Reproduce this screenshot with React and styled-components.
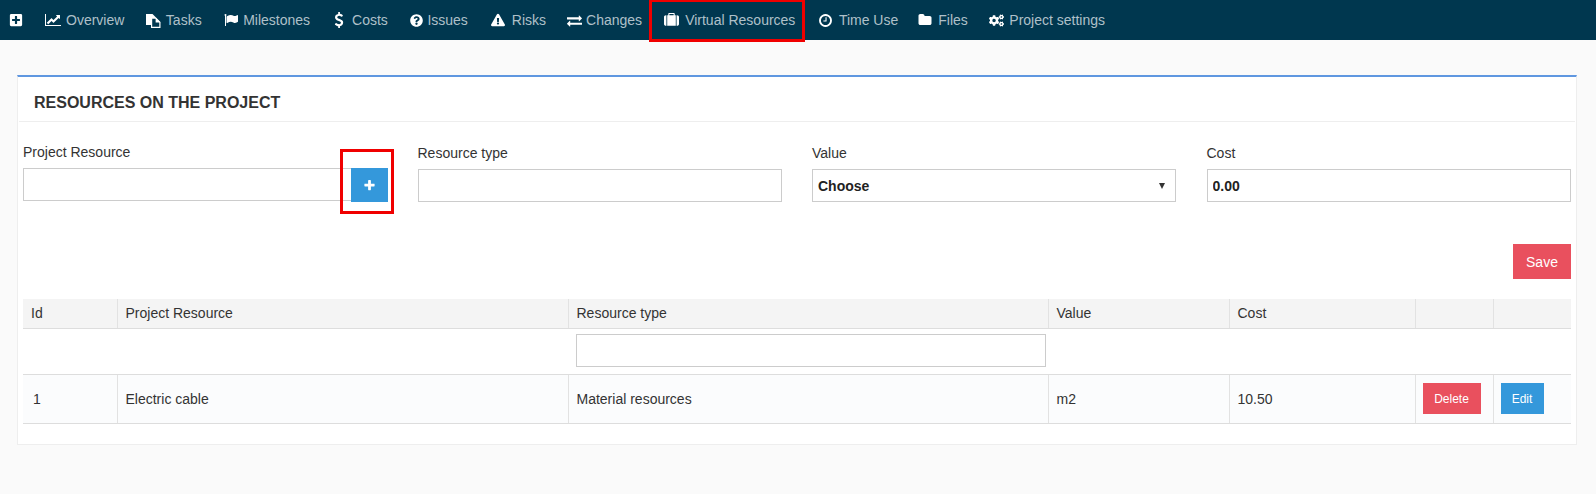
import React from 'react';
import styled, { createGlobalStyle } from 'styled-components';
import {
  FaPlusSquare,
  FaQuestionCircle,
  FaExclamationTriangle,
  FaCogs,
} from 'react-icons/fa';

const GlobalStyle = createGlobalStyle`
  * { box-sizing: border-box; }
  html, body { margin: 0; padding: 0; }
  body {
    background: #fafafa;
    color: #333;
    font-family: "Liberation Sans", Arial, sans-serif;
    font-size: 14px;
  }
`;

const Page = styled.div`
  width: 1596px;
  height: 494px;
  overflow: hidden;
`;

const TopNav = styled.nav`
  height: 40px;
  background: #00374f;
  display: flex;
  align-items: center;
  padding-left: 9px;
`;

const NavItem = styled.a`
  position: relative;
  display: flex;
  align-items: center;
  gap: ${p => p.$gap}px;
  margin-left: ${p => p.$left}px;
  color: #afc0c9;
  font-size: 14px;
  line-height: 40px;
  white-space: nowrap;

  svg {
    color: #fff;
    flex: none;
  }
`;

const RedMark = styled.span`
  position: absolute;
  left: -15px;
  right: -10px;
  top: 0;
  height: 42px;
  border: 3px solid #f00000;
  border-top-width: 2px;
`;

const Panel = styled.section`
  margin: 35px 19px 0 17px;
  height: 370px;
  background: #fff;
  border: 1px solid #eeeeee;
  border-top: 2px solid #5f97e0;
`;

const PanelHeader = styled.header`
  height: 45px;
  margin: 0 1px;
  padding: 8px 0 0 15px;
  display: flex;
  align-items: center;
  border-bottom: 1px solid #eeeeee;
`;

const PanelTitle = styled.h3`
  margin: 0;
  font-size: 16px;
  font-weight: 700;
  color: #333;
  text-transform: uppercase;
`;

const PanelBody = styled.div`
  padding: 0 5px;
`;

const FormGrid = styled.div`
  display: grid;
  grid-template-columns: repeat(4, 364px);
  column-gap: 30.5px;
  padding-top: 23px;
`;

const Field = styled.div`
  margin-top: ${p => (p.$raised ? -1 : 0)}px;
`;

const Label = styled.label`
  display: block;
  height: 24px;
  line-height: 16px;
  font-size: 14px;
  color: #333;
`;

const InputRow = styled.div`
  position: relative;
  display: flex;
`;

const TextInput = styled.input`
  flex: none;
  width: ${p => p.$width || '100%'};
  height: 33px;
  padding: 0 5px;
  background: #fff;
  border: 1px solid #cccccc;
  border-radius: 0;
  font-family: inherit;
  font-size: 14px;
  font-weight: 700;
  color: #222;
  outline: none;
`;

const AddButton = styled.button`
  position: relative;
  flex: none;
  width: 37px;
  height: 34px;
  margin-left: -1px;
  padding: 0;
  display: flex;
  align-items: center;
  justify-content: center;
  background: #3498db;
  border: 0;
  color: #fff;
`;

const AddMark = styled.span`
  position: absolute;
  left: -11px;
  right: -6px;
  top: -19px;
  bottom: -12px;
  border: 3px solid #f00000;
`;

const SelectBox = styled.div`
  height: 33px;
  padding: 0 10px 0 5px;
  display: flex;
  align-items: center;
  justify-content: space-between;
  border: 1px solid #cccccc;
  font-size: 14px;
  font-weight: 700;
  color: #222;
`;

const Caret = styled.span`
  width: 0;
  height: 0;
  border-left: 3.5px solid transparent;
  border-right: 3.5px solid transparent;
  border-top: 6px solid #333;
`;

const SaveRow = styled.div`
  display: flex;
  justify-content: flex-end;
  padding-top: 42px;
`;

const Button = styled.button`
  height: ${p => (p.$small ? 31 : 35)}px;
  width: ${p => p.$width}px;
  padding: 0;
  border: 0;
  display: block;
  background: ${p => (p.$tone === 'blue' ? '#3498db' : '#e9505e')};
  color: #fff;
  font-family: inherit;
  font-size: ${p => (p.$small ? 12 : 14)}px;
`;

const Table = styled.table`
  width: 1548px;
  margin-top: 20px;
  border-collapse: collapse;
  table-layout: fixed;
  font-size: 14px;
  color: #333;
`;

const HeadCell = styled.th`
  height: 29px;
  padding: 0 8px;
  background: #f4f4f4;
  border-bottom: 1px solid #dddddd;
  border-left: 1px solid #e2e2e2;
  font-weight: 400;
  text-align: left;
  &:first-child { border-left: 0; }
`;

const FilterCell = styled.td`
  height: 46px;
  padding: 0 2px 2px 8px;
  border-bottom: 1px solid #dddddd;
`;

const DataCell = styled.td`
  height: 49px;
  padding: 0 ${p => (p.$action ? 7 : 8)}px;
  background: #fbfcfd;
  border-bottom: 1px solid #dddddd;
  border-left: 1px solid #e2e2e2;
  &:first-child { border-left: 0; padding-left: 10px; }
`;

// Font Awesome 4 shapes, the package only carries the redrawn 5.x ones
const Fa4 = ({ d, size, box = 1792 }) => (
  <svg
    width={(size * box) / 1792}
    height={size}
    viewBox={`0 0 ${box} 1792`}
    fill="currentColor"
  >
    <path d={d} />
  </svg>
);

const TasksIcon = () => (
  <svg width="15" height="15" viewBox="0 0 15 15">
    <path d="M0 1h6.5L10 4.5V12H0z" fill="#fff" />
    <path
      d="M5.6 5.1h4.2l4.1 4.1v5.2H5.6z"
      fill="#00374f"
      stroke="#fff"
      strokeWidth="1.2"
    />
    <path d="M9.6 4.6v4.8h4.8z" fill="#fff" />
  </svg>
);

const paths = {
  line: 'M2048 1536v128h-2048v-1536h128v1408h1920zm-128-1248v435q0 21-19.5 29.5t-35.5-7.5l-121-121-633 633q-10 10-23 10t-23-10l-233-233-416 416-192-192 585-585q10-10 23-10t23 10l233 233 464-464-121-121q-16-16-7.5-35.5t29.5-19.5h435q14 0 23 9t9 23z',
  flag: 'M320 256q0 72-64 110v1266q0 13-9.5 22.5t-22.5 9.5h-64q-13 0-22.5-9.5t-9.5-22.5v-1266q-64-38-64-110 0-53 37.5-90.5t90.5-37.5 90.5 37.5 37.5 90.5zm1472 64v763q0 25-12.5 38.5t-39.5 27.5q-215 116-369 116-61 0-123.5-22t-108.5-48-115.5-48-142.5-22q-192 0-464 146-17 9-33 9-26 0-45-19t-19-45v-742q0-32 31-55 21-14 79-43 236-120 421-120 107 0 200 29t219 88q38 19 88 19 54 0 117.5-21t110-47 88-47 54.5-21q26 0 45 19t19 45z',
  dollar: 'M1362 1185q0 153-99.5 263.5t-258.5 136.5v175q0 14-9 23t-23 9h-135q-13 0-22.5-9.5t-9.5-22.5v-175q-66-9-127.5-31t-101.5-44.5-74-48-46.5-37.5-17.5-18q-17-21-2-41l103-135q7-10 23-12 15-2 24 9l2 2q113 99 243 125 37 8 74 8 81 0 142.5-43t61.5-122q0-28-15-53t-33.5-42-58.5-37.5-66-32-80-32.5q-39-16-61.5-25t-61.5-26.5-62.5-31-56.5-35.5-53.5-42.5-43.5-49-35.5-58-21-66.5-8.5-78q0-138 98-242t255-134v-180q0-13 9.5-22.5t22.5-9.5h135q14 0 23 9t9 23v176q57 6 110.5 23t87 33.5 63.5 37.5 39 29 15 14q17 18 5 38l-81 146q-8 15-23 16-14 3-27-7-3-3-14.5-12t-39-26.5-58.5-32-74.5-26-85.5-11.5q-95 0-155 43t-60 111q0 26 8.5 48t29.5 41.5 39.5 33 56 31 60.5 27 70 27.5q53 20 81 31.5t76 35 75.5 42.5 62 50 53 63.5 31.5 76.5 13 94z',
  exchange: 'M1792 1184v192q0 13-9.5 22.5t-22.5 9.5h-1376v192q0 13-9.5 22.5t-22.5 9.5q-12 0-24-10l-319-320q-9-9-9-22 0-14 9-23l320-320q9-9 23-9 13 0 22.5 9.5t9.5 22.5v192h1376q13 0 22.5 9.5t9.5 22.5zm0-544q0 14-9 23l-320 320q-9 9-23 9-13 0-22.5-9.5t-9.5-22.5v-192h-1376q-13 0-22.5-9.5t-9.5-22.5v-192q0-13 9.5-22.5t22.5-9.5h1376v-192q0-14 9-23t23-9q12 0 24 10l319 319q9 9 9 23z',
  suitcase: 'M640 256h512v-128h-512v128zm-352 0v1280h-64q-92 0-158-66t-66-158v-832q0-92 66-158t158-66h64zm1120 0v1280h-1024v-1280h128v-160q0-40 28-68t68-28h576q40 0 68 28t28 68v160h128zm384 224v832q0 92-66 158t-158 66h-64v-1280h64q92 0 158 66t66 158z',
  clock: 'M1024 544v448q0 14-9 23t-23 9h-320q-14 0-23-9t-9-23v-64q0-14 9-23t23-9h224v-352q0-14 9-23t23-9h64q14 0 23 9t9 23zm416 352q0-148-73-273t-198-198-273-73-273 73-198 198-73 273 73 273 198 198 273 73 273-73 198-198 73-273zm224 0q0 209-103 385.5t-279.5 279.5-385.5 103-385.5-103-279.5-279.5-103-385.5 103-385.5 279.5-279.5 385.5-103 385.5 103 279.5 279.5 103 385.5z',
  folder: 'M1728 608v704q0 92-66 158t-158 66h-1216q-92 0-158-66t-66-158v-960q0-92 66-158t158-66h320q92 0 158 66t66 158v32h672q92 0 158 66t66 158z',
  plus: 'M1600 736v192q0 40-28 68t-68 28h-416v416q0 40-28 68t-68 28h-192q-40 0-68-28t-28-68v-416h-416q-40 0-68-28t-28-68v-192q0-40 28-68t68-28h416v-416q0-40 28-68t68-28h192q40 0 68 28t28 68v416h416q40 0 68 28t28 68z',
};

const navLinks = [
  { label: 'Overview', icon: <Fa4 d={paths.line} size={14} box={2048} />, left: 22, gap: 5 },
  { label: 'Tasks', icon: <TasksIcon />, left: 21.5, gap: 5 },
  { label: 'Milestones', icon: <Fa4 d={paths.flag} size={14} />, left: 22, gap: 5.5 },
  { label: 'Costs', icon: <Fa4 d={paths.dollar} size={16} />, left: 21, gap: 5 },
  { label: 'Issues', icon: <FaQuestionCircle size={13} />, left: 22, gap: 4.5 },
  { label: 'Risks', icon: <FaExclamationTriangle size={14} />, left: 23.5, gap: 6.5 },
  { label: 'Changes', icon: <Fa4 d={paths.exchange} size={15} />, left: 20.5, gap: 4.5 },
  { label: 'Virtual Resources', icon: <Fa4 d={paths.suitcase} size={15} />, left: 21.5, gap: 6.5, marked: true },
  { label: 'Time Use', icon: <Fa4 d={paths.clock} size={15} />, left: 23, gap: 5.5 },
  { label: 'Files', icon: <Fa4 d={paths.folder} size={14} />, left: 20, gap: 6 },
  { label: 'Project settings', icon: <FaCogs size={15} />, left: 21, gap: 5.5 },
];

const columns = [94, 451, 480, 181, 186, 78, 78];
const heads = ['Id', 'Project Resource', 'Resource type', 'Value', 'Cost', '', ''];

const App = () => (
  <Page>
    <GlobalStyle />
    <TopNav>
      <NavItem $left={0} $gap={0}>
        <FaPlusSquare size={14} />
      </NavItem>
      {navLinks.map(link => (
        <NavItem key={link.label} $left={link.left} $gap={link.gap}>
          {link.icon}
          {link.label}
          {link.marked && <RedMark />}
        </NavItem>
      ))}
    </TopNav>

    <Panel>
      <PanelHeader>
        <PanelTitle>Resources on the project</PanelTitle>
      </PanelHeader>
      <PanelBody>
        <FormGrid>
          <Field $raised>
            <Label>Project Resource</Label>
            <InputRow>
              <TextInput $width="329px" />
              <AddButton>
                <Fa4 d={paths.plus} size={13} />
                <AddMark />
              </AddButton>
            </InputRow>
          </Field>
          <Field>
            <Label>Resource type</Label>
            <TextInput />
          </Field>
          <Field>
            <Label>Value</Label>
            <SelectBox>
              Choose
              <Caret />
            </SelectBox>
          </Field>
          <Field>
            <Label>Cost</Label>
            <TextInput defaultValue="0.00" />
          </Field>
        </FormGrid>

        <SaveRow>
          <Button $width={58}>Save</Button>
        </SaveRow>

        <Table>
          <colgroup>
            {columns.map((w, i) => (
              <col key={i} width={w} />
            ))}
          </colgroup>
          <thead>
            <tr>
              {heads.map((h, i) => (
                <HeadCell key={i}>{h}</HeadCell>
              ))}
            </tr>
          </thead>
          <tbody>
            <tr>
              <FilterCell />
              <FilterCell />
              <FilterCell>
                <TextInput />
              </FilterCell>
              <FilterCell />
              <FilterCell />
              <FilterCell />
              <FilterCell />
            </tr>
            <tr>
              <DataCell>1</DataCell>
              <DataCell>Electric cable</DataCell>
              <DataCell>Material resources</DataCell>
              <DataCell>m2</DataCell>
              <DataCell>10.50</DataCell>
              <DataCell $action>
                <Button $small $width={58}>Delete</Button>
              </DataCell>
              <DataCell $action>
                <Button $small $tone="blue" $width={43}>Edit</Button>
              </DataCell>
            </tr>
          </tbody>
        </Table>
      </PanelBody>
    </Panel>
  </Page>
);

export default App;
